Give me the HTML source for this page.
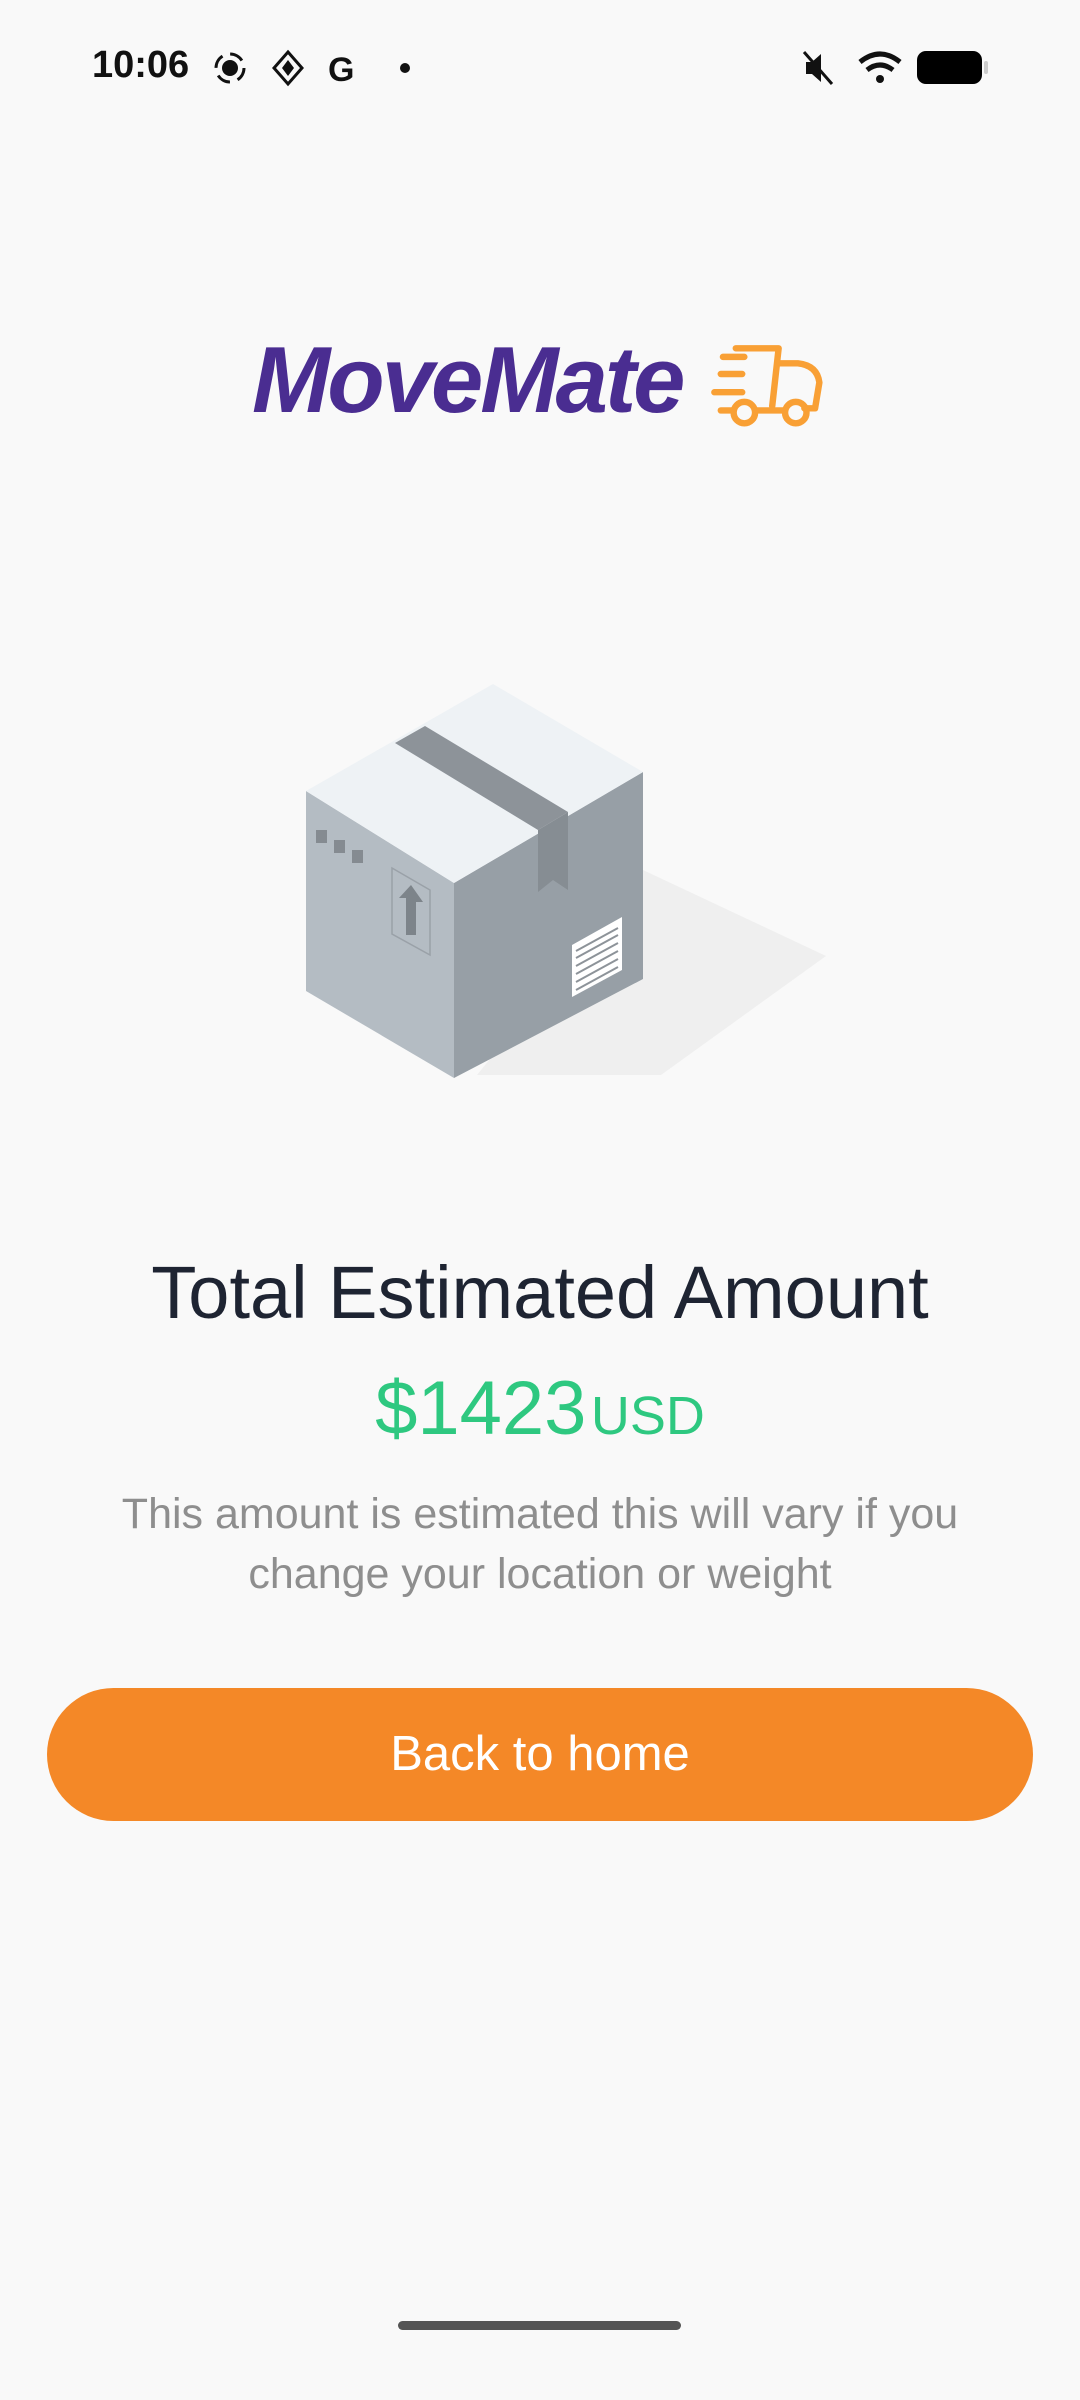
<!DOCTYPE html>
<html><head><meta charset="utf-8"><style>
*{margin:0;padding:0;box-sizing:border-box}
body{width:1080px;height:2400px;background:#f9f9f9;position:relative;overflow:hidden;font-family:"Liberation Sans",sans-serif}
.abs{position:absolute}
</style></head><body>
<div class="abs" style="left:92px;top:44px;font-size:38px;font-weight:bold;color:#111;letter-spacing:0px">10:06</div>
<svg class="abs" style="left:210px;top:48px" width="200" height="40" viewBox="0 0 200 40">
<circle cx="20" cy="20" r="8" fill="#111"/><circle cx="20" cy="20" r="14" fill="none" stroke="#111" stroke-width="3" stroke-dasharray="14 8"/>
<path d="M78 4 L92 20 L78 36 L64 20 Z" fill="none" stroke="#111" stroke-width="3"/><path d="M72 20 L78 12 L84 20 L78 28Z" fill="#111"/>
<text x="118" y="33" font-size="34" font-weight="bold" fill="#111" font-family="Liberation Sans">G</text>
<circle cx="195" cy="20" r="5" fill="#111"/>
</svg>
<svg class="abs" style="left:800px;top:48px" width="190" height="40" viewBox="0 0 190 40">
<path d="M6 14h6l9-8v28l-9-8H6z" fill="#111"/><path d="M4 4 L32 36" stroke="#111" stroke-width="3"/>
<path d="M60 14 Q80 -2 100 14" stroke="#111" stroke-width="5" fill="none"/><path d="M67 22 Q80 12 93 22" stroke="#111" stroke-width="5" fill="none"/><circle cx="80" cy="31" r="4" fill="#111"/>
<rect x="117" y="3" width="65" height="33" rx="9" fill="#000"/><rect x="184" y="13" width="4" height="13" rx="2" fill="#ccc"/>
</svg>
<div class="abs" style="left:252px;top:326px;font-size:94px;font-weight:bold;font-style:italic;color:#4a2d91;letter-spacing:-3px">MoveMate</div>
<svg class="abs" style="left:696px;top:344px" width="146" height="90" viewBox="0 0 122 84" fill="none" stroke="#f9a035" stroke-width="6" stroke-linecap="round" stroke-linejoin="round">
<path d="M30 4 H 70 L 64 58"/><path d="M70 18 H 88 Q106 20 108 36 L104 60 H94"/>
<path d="M18 12h20M16 28h20M10 45h26"/><path d="M16 62h10M50 62h24"/>
<circle cx="38" cy="64" r="10"/><circle cx="86" cy="64" r="10"/>
</svg>
<svg class="abs" style="left:0;top:0" width="1080" height="1200" viewBox="0 0 1080 1200">
<polygon points="643,870 826,956 661,1075 477,1075" fill="#efefef"/>
<polygon points="306,791 454,883 454,1078 306,991" fill="#b4bcc3"/>
<polygon points="454,883 643,772 643,979 454,1078" fill="#979fa6"/>
<polygon points="493,684 643,772 454,883 306,791" fill="#eef2f5"/>
<polygon points="395,743 425,726 568,812 538,830" fill="#8d9399"/>
<polygon points="538,830 568,812 568,890 553,880 538,892" fill="#868d93"/>
<rect x="316" y="830" width="11" height="13" fill="#858b91"/><rect x="334" y="840" width="11" height="13" fill="#858b91"/><rect x="352" y="850" width="11" height="13" fill="#858b91"/>
<polygon points="392,868 430,890 430,955 392,934" fill="none" stroke="#9aa1a8" stroke-width="1.5"/>
<path d="M411 885 L423 902 H416 V935 H406 V898 H399 Z" fill="#7d848a"/>
<polygon points="572,945 622,917 622,970 572,997" fill="#fff"/>
<g stroke="#8d9399" stroke-width="2"><path d="M576 951L618 928M576 958L618 935M576 966L618 943M576 974L618 951M576 982L618 959M576 990L618 967"/></g>
</svg>
<div class="abs" style="left:0;width:1080px;top:1250px;text-align:center;font-size:74px;color:#1e2432">Total Estimated Amount</div>
<div class="abs" style="left:0;width:1080px;top:1365px;text-align:center;color:#2ec880"><span style="font-size:76px">$1423</span>&nbsp;<span style="font-size:54px">USD</span></div>
<div class="abs" style="left:0;width:1080px;top:1484px;text-align:center;font-size:43px;line-height:60px;color:#8e8e8e">This amount is estimated this will vary if you<br>change your location or weight</div>
<div class="abs" style="left:47px;top:1688px;width:986px;height:133px;border-radius:67px;background:#f48827;color:#fff;font-size:49px;text-align:center;line-height:133px">Back to home</div>
<div class="abs" style="left:398px;top:2321px;width:283px;height:9px;border-radius:5px;background:#555"></div>
</body></html>
